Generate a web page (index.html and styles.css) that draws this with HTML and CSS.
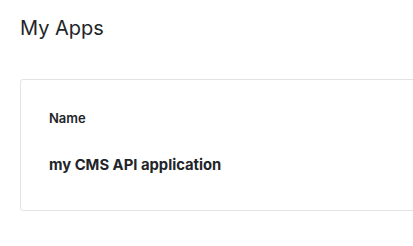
FILE: index.html
```html
<!DOCTYPE html>
<html>
<head>
<meta charset="utf-8">
<link rel="stylesheet" href="styles.css">
</head>
<body>
<div class="page">
  <h1 class="title">My Apps</h1>
  <div class="card">
    <div class="label">Name</div>
    <div class="value">my CMS API application</div>
  </div>
</div>
</body>
</html>
```
FILE: styles.css
```css
html, body {
  margin: 0;
  padding: 0;
  background: #ffffff;
  overflow: hidden;
}
.page {
  font-family: Inter, "Liberation Sans", sans-serif;
  color: #212529;
  padding: 16px 20px 0 20px;
  width: 480px;
}
.title {
  margin: 0;
  font-size: 20px;
  line-height: 24px;
  font-weight: 400;
}
.card {
  margin-top: 39px;
  border: 1px solid #e3e3e3;
  border-radius: 3px;
  padding: 28px 28px 35px 28px;
}
.label {
  font-size: 13px;
  line-height: 20px;
  font-weight: 600;
}
.value {
  margin-top: 27px;
  font-size: 14.8px;
  line-height: 20px;
  font-weight: 700;
}
```
